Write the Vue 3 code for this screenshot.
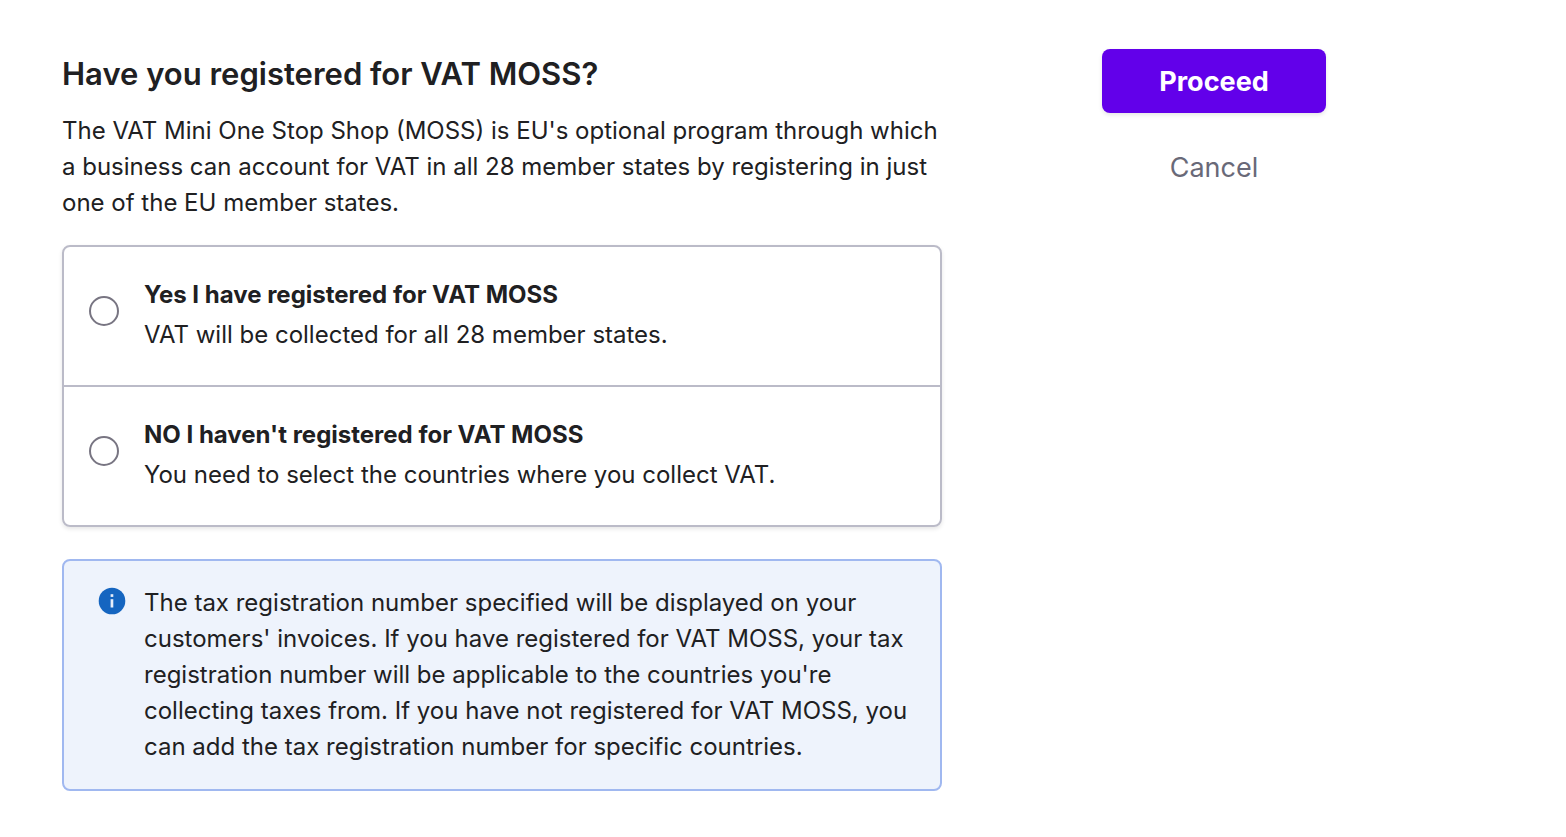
<script setup>
import { ref } from 'vue'

const choice = ref('')
const options = [
  { value: 'yes', title: 'Yes I have registered for VAT MOSS', hint: 'VAT will be collected for all 28 member states.' },
  { value: 'no', title: "NO I haven't registered for VAT MOSS", hint: 'You need to select the countries where you collect VAT.' },
]
</script>

<template>
  <form class="page" @submit.prevent>
    <main class="content">
      <h1>Have you registered for VAT MOSS?</h1>
      <p class="intro">
        The VAT Mini One Stop Shop (MOSS) is EU's optional program through which a business can
        account for VAT in all 28 member states by registering in just one of the EU member states.
      </p>
      <div class="options" role="radiogroup" aria-label="VAT MOSS registration">
        <label v-for="o in options" :key="o.value" class="option" :for="'moss-' + o.value">
          <input :id="'moss-' + o.value" v-model="choice" type="radio" name="moss" :value="o.value" />
          <span class="text">
            <span class="title">{{ o.title }}</span>
            <span class="hint">{{ o.hint }}</span>
          </span>
        </label>
      </div>
      <aside class="info">
        <svg class="icon" viewBox="0 0 28 28" aria-hidden="true">
          <circle cx="14" cy="14" r="13.3" fill="#1565c0" />
          <rect x="12.6" y="7.2" width="2.7" height="2.7" fill="#e8eefa" />
          <rect x="12.6" y="12.2" width="2.7" height="8.3" fill="#e8eefa" />
        </svg>
        <p>
          The tax registration number specified will be displayed on your customers' invoices. If
          you have registered for VAT MOSS, your tax registration number will be applicable to the
          countries you're collecting taxes from. If you have not registered for VAT MOSS, you can
          add the tax registration number for specific countries.
        </p>
      </aside>
    </main>
    <div class="actions">
      <button type="submit" class="proceed">Proceed</button>
      <button type="button" class="cancel">Cancel</button>
    </div>
  </form>
</template>

<style>
body {
  background: #fff;
}
</style>

<style scoped>
.page {
  display: flex;
  align-items: flex-start;
  gap: 160px;
  padding: 49px 62px 46px;
  font-family: Inter, "Liberation Sans", sans-serif;
  font-size: 24px;
  line-height: 36px;
  color: #202022;
}
.content {
  flex: 0 1 880px;
  min-width: 0;
}
h1 {
  margin: 0 0 14px;
  font-size: 31px;
  line-height: 50px;
  font-weight: 600;
}
p {
  margin: 0;
}
.options {
  margin: 24px 0 32px;
  border: 2px solid #bbbbc8;
  border-radius: 8px;
  box-shadow: 0 2px 4px rgba(0, 0, 0, 0.1);
}
.option {
  display: flex;
  gap: 25px;
  padding: 28px 25px 30px;
}
.option + .option {
  border-top: 2px solid #bbbbc8;
}
.option input {
  appearance: none;
  flex: none;
  box-sizing: border-box;
  width: 30px;
  height: 30px;
  margin: 21px 0 0;
  border: 2px solid #787582;
  border-radius: 50%;
  background: #fff;
}
.option input:checked {
  border: 9px solid #6200ea;
}
.text {
  display: flex;
  flex-direction: column;
}
.title {
  line-height: 40px;
  font-weight: 700;
}
.hint {
  line-height: 40px;
}
.info {
  display: flex;
  gap: 18px;
  padding: 24px 24px 24px 34px;
  border: 2px solid #a0b8f0;
  border-radius: 8px;
  background: #eef3fc;
}
.icon {
  flex: none;
  width: 28px;
  height: 28px;
  margin-top: 2px;
}
.actions {
  display: flex;
  flex: 0 0 224px;
  flex-direction: column;
  gap: 22px;
}
button {
  height: 64px;
  border: 0;
  border-radius: 8px;
  font-family: inherit;
  font-size: 27px;
  cursor: pointer;
}
.proceed {
  background: #6200ea;
  color: #fff;
  font-weight: 700;
  box-shadow: 0 2px 4px rgba(0, 0, 0, 0.1);
}
.cancel {
  background: transparent;
  color: #696978;
}
</style>
